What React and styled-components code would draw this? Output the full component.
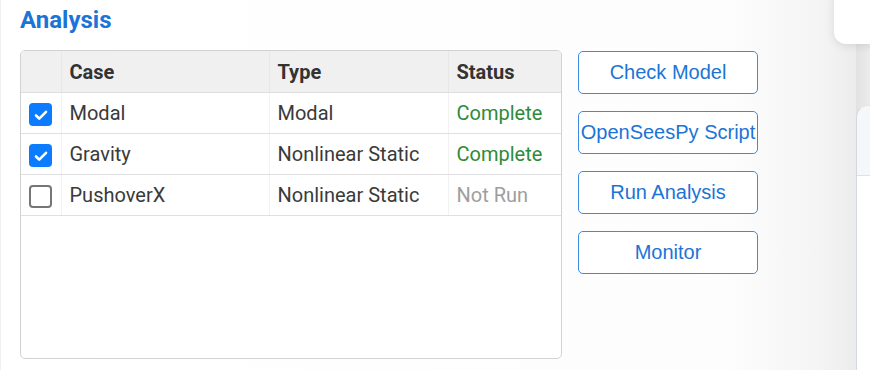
import React from "react";
import styled, { createGlobalStyle } from "styled-components";

const GlobalStyle = createGlobalStyle`
  html, body {
    margin: 0;
    padding: 0;
    width: 870px;
    height: 370px;
    overflow: hidden;
    background: #ffffff;
  }
`

const Page = styled.div`
  position: relative;
  display: flex;
  width: 870px;
  height: 370px;
  font-family: Roboto, "Liberation Sans", sans-serif;
`
const Panel = styled.div`
  flex: 1;
  display: flex;
  flex-direction: column;
  padding: 6px 0 0 20px;
  border-left: 1px solid #f0f0f0;
  background: linear-gradient(to right, #ffffff 0%, #fdfdfd 85%, #f4f4f4 96%, #ececec 100%);
`
const Title = styled.h2`
  margin: 0 0 0 -1px;
  font-size: 24px;
  line-height: 28px;
  font-weight: 700;
  color: #1b74d6;
`
const Body = styled.div`
  display: flex;
  gap: 16px;
  margin-top: 16px;
  margin-left: -1px;
`
const TableBox = styled.div`
  width: 540px;
  height: 307px;
  border: 1px solid #d2d2d2;
  border-radius: 5px;
  background: #fff;
  overflow: hidden;
`
const Table = styled.table`
  width: 100%;
  border-collapse: collapse;
  table-layout: fixed;
`
const Th = styled.th`
  height: 41px;
  padding: 0 0 0 8px;
  text-align: left;
  font-size: 20px;
  font-weight: 700;
  color: #333;
  background: #f0f0f0;
  border-bottom: 1px solid #dedede;
  border-left: 1px solid #e8e8e8;
  &:first-child { border-left: none; }
`
const Td = styled.td`
  height: 40px;
  padding: 0 0 0 8px;
  font-size: 20px;
  color: ${p => p.$color || "#3a3a3a"};
  border-bottom: 1px solid #e0e0e0;
  border-left: 1px solid #f2f2f2;
  &:first-child { border-left: none; padding: 0; text-align: center; }
`
const Box = styled.span`
  display: inline-flex;
  align-items: center;
  justify-content: center;
  width: 23px;
  height: 23px;
  box-sizing: border-box;
  border-radius: 4px;
  margin-top: 3px;
  vertical-align: middle;
  background: ${p => (p.$on ? "#0b7cff" : "#fff")};
  border: ${p => (p.$on ? "none" : "2px solid #767676")};
`
const Buttons = styled.div`
  display: flex;
  flex-direction: column;
  gap: 17px;
  padding-top: 1px;
`
const Button = styled.button`
  width: 180px;
  height: 43px;
  padding: 0;
  border: 1px solid #3d8ae0;
  border-radius: 5px;
  background: #fff;
  color: #1b74d6;
  font-family: "Liberation Sans", Arial, sans-serif;
  font-size: 20px;
  white-space: nowrap;
`
const Side = styled.div`
  width: 14px;
  display: flex;
  flex-direction: column;
  background: linear-gradient(to right, #e2e2e2, #ececec);
`
const SideCard = styled.div`
  margin-top: 105px;
  flex: 1;
  border-top-left-radius: 12px;
  border-left: 1px solid #d3d8df;
  border-top: 1px solid #e2e6ea;
  background: linear-gradient(to bottom, #f5f7fa 0, #f5f7fa 69px, #dde2e8 69px, #dde2e8 70px, #fff 70px);
`
const TopCard = styled.div`
  position: absolute;
  right: -12px;
  top: -12px;
  width: 48px;
  height: 56px;
  border-radius: 12px;
  background: #fff;
  box-shadow: 0 2px 10px rgba(0, 0, 0, 0.1);
`

const rows = [
  { on: true, name: "Modal", type: "Modal", status: "Complete" },
  { on: true, name: "Gravity", type: "Nonlinear Static", status: "Complete" },
  { on: false, name: "PushoverX", type: "Nonlinear Static", status: "Not Run" },
];

function Check({ on }) {
  return (
    <Box $on={on}>
      {on && (
        <svg width="16" height="16" viewBox="0 0 16 16">
          <path d="M3 8.5l3.2 3.2L13 4.8" fill="none" stroke="#fff" strokeWidth="2.6" strokeLinecap="round" strokeLinejoin="round" />
        </svg>
      )}
    </Box>
  );
}

export default function App() {
  return (
    <>
      <GlobalStyle />
      <Page>
        <Panel>
          <Title>Analysis</Title>
          <Body>
            <TableBox>
              <Table>
                <colgroup>
                  <col style={{ width: 40 }} />
                  <col style={{ width: 208 }} />
                  <col style={{ width: 179 }} />
                  <col />
                </colgroup>
                <thead>
                  <tr>
                    <Th></Th>
                    <Th>Case</Th>
                    <Th>Type</Th>
                    <Th>Status</Th>
                  </tr>
                </thead>
                <tbody>
                  {rows.map(r => (
                    <tr key={r.name}>
                      <Td><Check on={r.on} /></Td>
                      <Td>{r.name}</Td>
                      <Td>{r.type}</Td>
                      <Td $color={r.status === "Complete" ? "#2e8b3a" : "#9e9e9e"}>{r.status}</Td>
                    </tr>
                  ))}
                </tbody>
              </Table>
            </TableBox>
            <Buttons>
              <Button>Check Model</Button>
              <Button>OpenSeesPy Script</Button>
              <Button>Run Analysis</Button>
              <Button>Monitor</Button>
            </Buttons>
          </Body>
        </Panel>
        <Side>
          <SideCard />
        </Side>
        <TopCard />
      </Page>
    </>
  );
}
